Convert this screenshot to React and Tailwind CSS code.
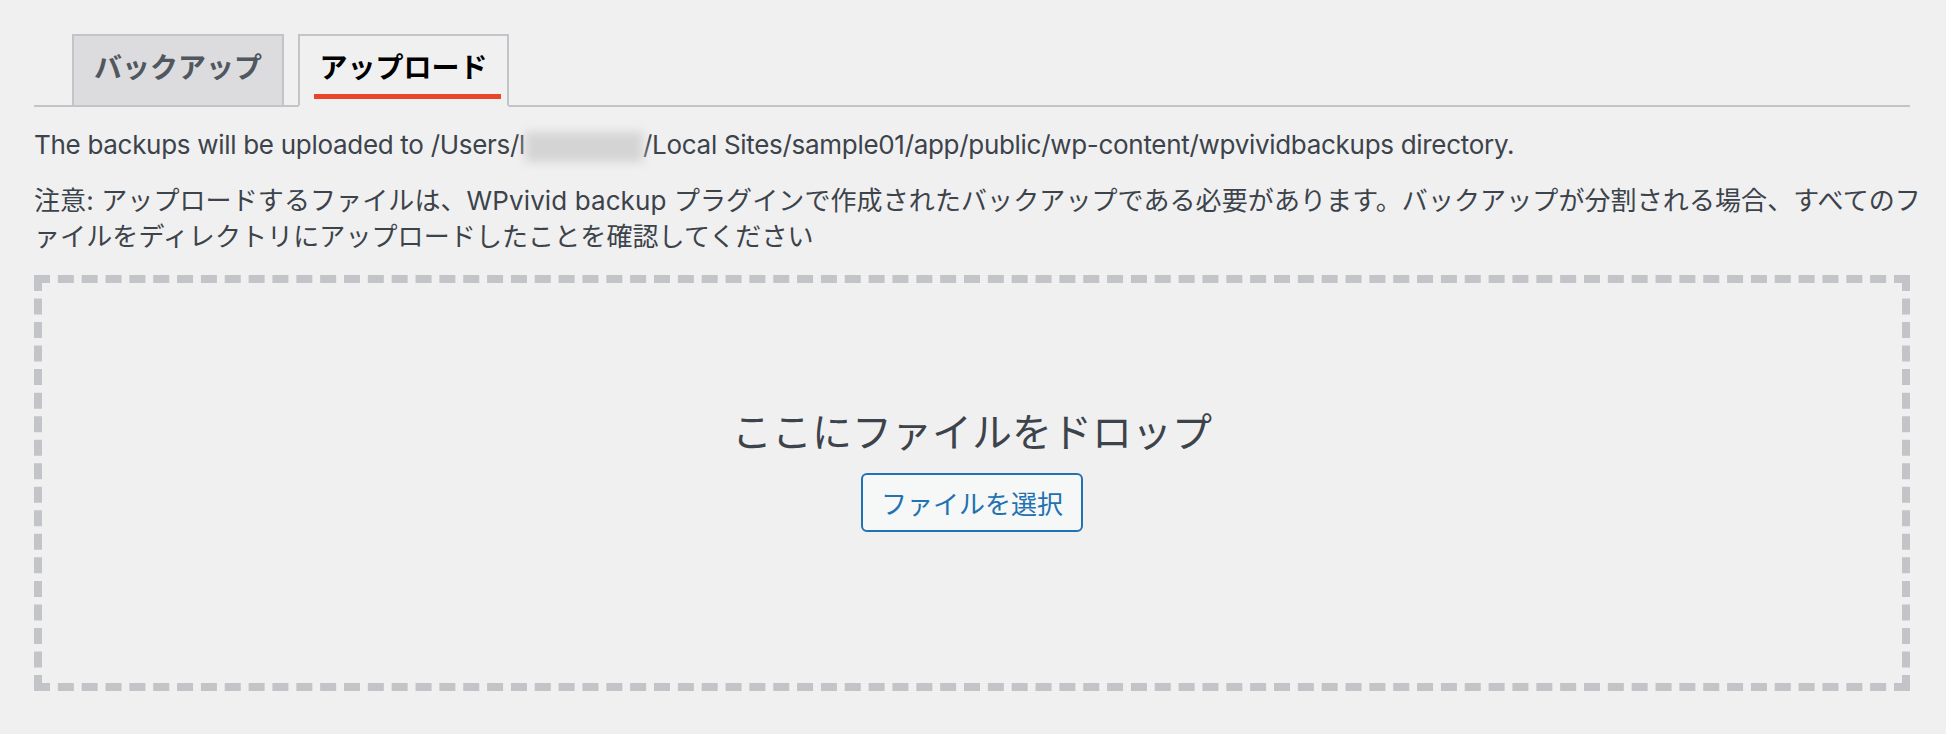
export default function App() {
  return (
    <div className="min-h-screen bg-[#f0f0f1] pl-[34px] pr-[36px] pt-[34px] font-['Inter','Noto_Sans_CJK_JP',sans-serif] text-[#3c434a]">
      {/* Tabs */}
      <div className="flex gap-[14px] border-b-2 border-[#c3c4c7] pl-[38px]">
        <div className="-mb-[2px] flex h-[73px] w-[212px] flex-col items-center border-2 border-[#c3c4c7] bg-[#dcdcde] pt-[18px]">
          <span className="text-[28px] font-bold leading-[28px] text-[#50575e]">バックアップ</span>
        </div>
        <div className="-mb-[2px] flex h-[73px] w-[211px] flex-col border-2 border-[#c3c4c7] border-b-[#f0f0f1] bg-[#f0f0f1] pt-[18px]">
          <span className="text-center text-[28px] font-bold leading-[28px] text-black">アップロード</span>
          <div className="ml-[14px] mr-[6px] mt-[12px] h-[5px] bg-[#e9452b]" />
        </div>
      </div>

      {/* Info */}
      <p className="mt-[20px] text-[26px] leading-[36px] tracking-[-0.3px]">
        The backups will be uploaded to /Users/l
        <span className="inline-block h-[30px] w-[118px] align-middle bg-[#d4d4d4] blur-[5px]" />
        /Local Sites/sample01/app/public/wp-content/wpvividbackups directory.
      </p>
      <p className="mt-[20px] whitespace-nowrap text-[26px] leading-[36px] tracking-[0.1px]">
        注意: アップロードするファイルは、WPvivid backup プラグインで作成されたバックアップである必要があります。バックアップが分割される場合、すべてのフ
        <br />
        ァイルをディレクトリにアップロードしたことを確認してください
      </p>

      {/* Drop area */}
      <div className="mt-[20px] flex h-[416px] flex-col items-center border-8 border-dashed border-[#c3c4c7] pt-[121px]">
        <p className="font-['Noto_Sans_CJK_JP',sans-serif] text-[40px] leading-[52px] text-[#3c434a]">ここにファイルをドロップ</p>
        <button className="mt-[17px] h-[59px] rounded-[6px] border-2 border-[#2271b1] bg-[#f6f7f7] px-[18px] font-['Noto_Sans_CJK_JP',sans-serif] text-[26px] text-[#2271b1]">
          ファイルを選択
        </button>
      </div>
    </div>
  )
}
